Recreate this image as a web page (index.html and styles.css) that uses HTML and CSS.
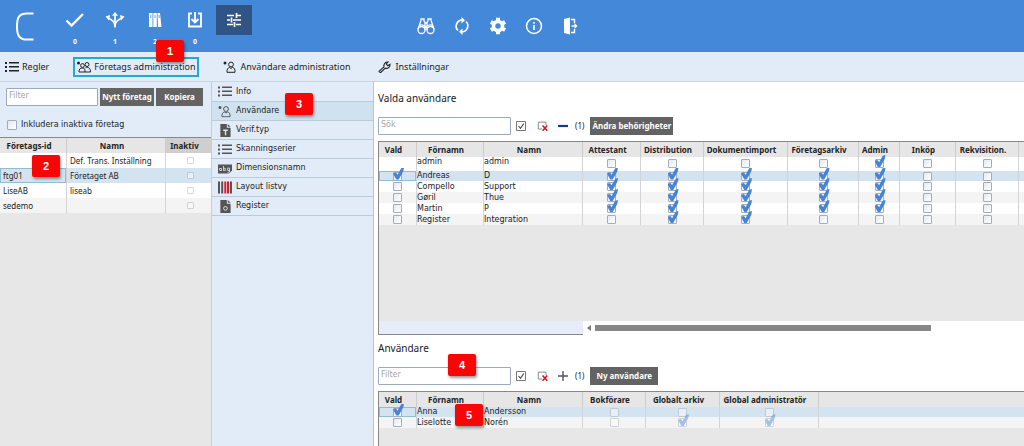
FILE: index.html
```html
<!DOCTYPE html>
<html lang="sv">
<head>
<meta charset="utf-8">
<meta name="viewport" content="width=device-width, initial-scale=1">
<title>Företags administration</title>
<link rel="stylesheet" href="styles.css">
</head>
<body>
<svg class="defs" aria-hidden="true">
  <symbol id="list" viewBox="0 0 14 12"><path d="M0 1h2v2H0zM0 5h2v2H0zM0 9h2v2H0zM4 1h10v1.500H4zM4 5h10v1.500H4zM4 9h10v1.500H4z" fill="currentColor"/></symbol>
  <symbol id="user" viewBox="0 0 14 12"><circle cx="2" cy="2" r="1.500" fill="currentColor"/><g fill="none" stroke="currentColor"><circle cx="8" cy="3.500" r="2.400"/><path d="M4 11.300c-.3-3 1-4.700 2.500-4.800l1.500 1 1.500-1c1.700.1 2.800 1.800 2.500 4.800z"/></g></symbol>
  <symbol id="doc" viewBox="0 0 14 14"><path d="M2 0h7v4h4v10H2zM10 0l3 3h-3z" fill="#555"/><path d="M5 6h5v1.500H8.300V12H6.800V7.500H5z" fill="#dde8f4"/></symbol>
  <symbol id="box-check" viewBox="0 0 12 12"><path d="M1.500 1.500h9v9h-9z" fill="none" stroke="#777"/><path d="M3.500 6l2 2.300L8.800 3.500" fill="none" stroke="#444" stroke-width="1.100"/></symbol>
  <symbol id="box-clear" viewBox="0 0 14 12"><path d="M6 9.500H1.500v-8h9V5" fill="none" stroke="#777"/><path d="M6.500 5.500l5.500 6M12 5.500l-5.500 6" stroke="#e0101b" stroke-width="1.800"/></symbol>
</svg>

<header class="topbar">
  <svg class="logo" viewBox="0 0 20 30" role="img" aria-label="C"><path d="M18.500 1.500H12C4.500 1.500 2 5 2 14.500S4.500 27.500 12 27.500h6.500" fill="none" stroke="#fff" stroke-width="2"/></svg>
  <nav class="counters">
    <button class="counter" aria-label="Godkänn"><svg viewBox="0 0 20 16"><path d="M1.500 8.500l5 5L18 2" fill="none" stroke="#fff" stroke-width="2.400"/></svg><span>0</span></button>
    <button class="counter" aria-label="Fördela"><svg viewBox="0 0 20 16"><g fill="none" stroke="#fff" stroke-width="1.700"><path d="M10 15.500V3M10 14c0-3-2-6-7-8M10 14c0-3 2-6 7-8"/></g><path d="M7 3.800L10 0l3 3.800zM5 3L4 8.500.5 4.500zM15 3l1 5.500 3.500-4z" fill="#fff"/></svg><span>1</span></button>
    <button class="counter" aria-label="Arkiv"><svg viewBox="0 0 20 16"><path d="M4 1h3.500v14H4zM8.300 1h3.500v14H8.300zM12.500 1H15l1.500 14H13z" fill="#fff"/><path d="M5.800 3v3M10 3v3M14 3l.3 3" stroke="#4488d9" stroke-width=".8"/></svg><span>2</span></button>
    <button class="counter" aria-label="Inkorg"><svg viewBox="0 0 20 16"><path d="M7 1.500H4v13h12v-13h-3M10 0v10M6.500 7l3.500 3.500L13.500 7" fill="none" stroke="#fff" stroke-width="1.800"/></svg><span>0</span></button>
  </nav>
  <button class="settings" aria-label="Administration"><svg viewBox="0 0 16 14"><path d="M1 2.500h7M11 2.500h4M10.500 0v5M1 7h3M7 7h8M5.500 4.500v5M1 11.500h6M10 11.500h5M8.500 9v5" fill="none" stroke="#fff" stroke-width="1.700"/></svg></button>
  <nav class="tools">
    <button aria-label="Sök"><svg viewBox="0 0 18 18"><g fill="none" stroke="#fff" stroke-width="1.300"><circle cx="4.500" cy="13" r="3.500"/><circle cx="13.500" cy="13" r="3.500"/><path d="M1 12L4 3.500V2h3v2l1 1.500V13M17 12l-3-8.500V2h-3v2l-1 1.500V13M8 6h2M8 10h2M2.500 8.500c2-1 4-.5 5.500 1M15.500 8.500c-2-1-4-.5-5.500 1"/></g></svg></button>
    <button aria-label="Uppdatera"><svg viewBox="0 0 18 18"><g fill="none" stroke="#fff" stroke-width="1.700"><path d="M5 13.500A6 6 0 0 1 9 3.200M13 4.500A6 6 0 0 1 9 14.800"/></g><path d="M8.500 0l3.500 3.200-3.500 3.200zM9.500 18L6 14.800l3.500-3.200z" fill="#fff"/></svg></button>
    <button aria-label="Alternativ"><svg viewBox="0 0 18 18"><circle cx="9" cy="9" r="4.500" fill="none" stroke="#fff" stroke-width="3.600"/><path d="M9 .8v3.400M9 13.800v3.400M1.900 4.900l3 1.700M13.100 11.400l3 1.700M1.900 13.100l3-1.700M13.100 6.600l3-1.700" stroke="#fff" stroke-width="4"/></svg></button>
    <button aria-label="Information"><svg viewBox="0 0 18 18"><circle cx="9" cy="9" r="7.500" fill="none" stroke="#fff" stroke-width="1.500"/><path d="M9 8v5M9 5v1.700" stroke="#fff" stroke-width="1.600"/></svg></button>
    <button aria-label="Logga ut"><svg viewBox="0 0 18 18"><path d="M3 2l6-1.500v17L3 16z" fill="#fff"/><path d="M10 2.500h3.500V6M10 15.500h3.500V12M10.500 9h5" fill="none" stroke="#fff" stroke-width="1.400"/><path d="M13.500 6l3 3-3 3z" fill="#fff"/></svg></button>
  </nav>
  <span class="mark mark-1">1</span>
</header>

<nav class="tabs">
  <a href="#regler" class="tab tab-rules"><svg viewBox="0 0 14 12"><use href="#list"/></svg>Regler</a>
  <a href="#foretag" class="tab tab-company active"><svg viewBox="0 0 14 12"><circle cx="1.500" cy="2" r="1.500" fill="currentColor"/><g fill="none" stroke="currentColor"><circle cx="5.500" cy="4.500" r="1.900"/><circle cx="10" cy="3.500" r="2"/><path d="M2 11c0-3 1-4 3.500-4S8 8.500 8 11zM8.500 6.500c3-.5 5 .5 5 4.500H8"/></g></svg>Företags administration</a>
  <a href="#anvandare" class="tab tab-users"><svg viewBox="0 0 14 12"><use href="#user"/></svg>Användare administration</a>
  <a href="#installningar" class="tab"><svg viewBox="0 0 14 12"><path d="M2 11.500L1 10.300 6 5.800C5.300 3 7.500.8 10 1L8.300 3l1.500 1.700L12 3.200C12.300 6 10 8 7.300 7.200L2.700 11.500z" fill="none" stroke="currentColor" stroke-width="1.100"/></svg>Inställningar</a>
</nav>

<div class="workspace">
  <section class="companies">
    <div class="company-tools">
      <input class="field" type="text" placeholder="Filter" aria-label="Filtrera företag">
      <button class="btn">Nytt företag</button>
      <button class="btn btn-copy">Kopiera</button>
    </div>
    <label class="include"><input class="cb" type="checkbox">Inkludera inaktiva företag</label>
    <div class="company-grid">
      <table class="grid roomy">
        <colgroup><col class="w-id"><col class="w-name"><col></colgroup>
        <thead><tr><th>Företags-id</th><th>Namn</th><th class="sorted">Inaktiv</th></tr></thead>
        <tbody>
          <tr><td></td><td>Def. Trans. Inställning</td><td><input class="cb faint" type="checkbox" disabled aria-label="Inaktiv"></td></tr>
          <tr class="sel"><td class="focus">ftg01</td><td>Företaget AB</td><td><input class="cb faint" type="checkbox" disabled aria-label="Inaktiv"></td></tr>
          <tr><td>LiseAB</td><td>liseab</td><td><input class="cb faint" type="checkbox" disabled aria-label="Inaktiv"></td></tr>
          <tr><td>sedemo</td><td></td><td><input class="cb faint" type="checkbox" disabled aria-label="Inaktiv"></td></tr>
        </tbody>
      </table>
      <span class="mark mark-2">2</span>
    </div>
  </section>

  <nav class="menu">
    <a href="#info"><svg viewBox="0 0 14 12"><use href="#list"/></svg>Info</a>
    <a href="#users" class="current"><svg viewBox="0 0 14 12"><use href="#user"/></svg>Användare</a>
    <a href="#verif"><svg viewBox="0 0 14 14"><use href="#doc"/></svg>Verif.typ</a>
    <a href="#skanning"><svg viewBox="0 0 14 12"><use href="#list"/></svg>Skanningserier</a>
    <a href="#dimension"><svg viewBox="0 0 14 12"><path d="M0 2h14v6l-3 3H0z" fill="#555"/><path d="M1.500 7.500V6h2v2h-2M5.500 3.500V8h1.800V5.800H5.500M11.500 5.500H9.700V8h1.800M11.500 5.500V9.500l-2 .5" fill="none" stroke="#dde8f4" stroke-width=".8"/></svg>Dimensionsnamn</a>
    <a href="#layout"><svg viewBox="0 0 14 12"><path d="M0 0h2v12H0zM3.200 0h2v12h-2zM12 0h2v12h-2z" fill="#555"/><path d="M6.300 0h2v12h-2zM9 0h2v12H9z" fill="#e2172c"/></svg>Layout listvy</a>
    <a href="#register"><svg viewBox="0 0 14 14"><path d="M2 0h7v4h4v10H2zM10 0l3 3h-3z" fill="#555"/><circle cx="7.500" cy="9" r="2" fill="none" stroke="#dde8f4"/></svg>Register</a>
    <span class="mark mark-3">3</span>
  </nav>

  <main class="content">
    <h2>Valda användare</h2>
    <div class="bar">
      <input class="field" type="text" placeholder="Sök" aria-label="Sök valda användare">
      <button class="ico" aria-label="Markera alla"><svg viewBox="0 0 12 12"><use href="#box-check"/></svg></button>
      <button class="ico" aria-label="Avmarkera alla"><svg viewBox="0 0 14 12"><use href="#box-clear"/></svg></button>
      <button class="ico ico-sign" aria-label="Ta bort"><svg viewBox="0 0 12 12"><path d="M1 6h10" stroke="#143c7d" stroke-width="2.200"/></svg></button>
      <span class="count">(1)</span>
      <button class="btn">Ändra behörigheter</button>
    </div>
    <div class="panel panel-main">
      <table class="grid">
        <colgroup><col class="c-vald"><col class="c-first"><col class="c-last"><col class="c-att"><col class="c-dist"><col class="c-dok"><col class="c-ark"><col class="c-adm"><col class="c-ink"><col class="c-rek"><col></colgroup>
        <thead><tr><th>Vald</th><th>Förnamn</th><th>Namn</th><th>Attestant</th><th>Distribution</th><th>Dokumentimport</th><th>Företagsarkiv</th><th>Admin</th><th>Inköp</th><th>Rekvisition.</th><th></th></tr></thead>
        <tbody>
          <tr class="tall"><td></td><td>admin</td><td>admin</td><td><input class="cb" type="checkbox" aria-label="Attestant"></td><td><input class="cb" type="checkbox" aria-label="Distribution"></td><td><input class="cb" type="checkbox" aria-label="Dokumentimport"></td><td><input class="cb" type="checkbox" aria-label="Företagsarkiv"></td><td><input class="cb" type="checkbox" checked aria-label="Admin"></td><td><input class="cb" type="checkbox" aria-label="Inköp"></td><td><input class="cb" type="checkbox" aria-label="Rekvisition"></td><td></td></tr>
          <tr class="sel"><td class="focus"><input class="cb" type="checkbox" checked aria-label="Vald"></td><td>Andreas</td><td>D</td><td><input class="cb" type="checkbox" checked aria-label="Attestant"></td><td><input class="cb" type="checkbox" checked aria-label="Distribution"></td><td><input class="cb" type="checkbox" checked aria-label="Dokumentimport"></td><td><input class="cb" type="checkbox" checked aria-label="Företagsarkiv"></td><td><input class="cb" type="checkbox" checked aria-label="Admin"></td><td><input class="cb" type="checkbox" aria-label="Inköp"></td><td><input class="cb" type="checkbox" aria-label="Rekvisition"></td><td></td></tr>
          <tr><td><input class="cb" type="checkbox" aria-label="Vald"></td><td>Compello</td><td>Support</td><td><input class="cb" type="checkbox" checked aria-label="Attestant"></td><td><input class="cb" type="checkbox" checked aria-label="Distribution"></td><td><input class="cb" type="checkbox" checked aria-label="Dokumentimport"></td><td><input class="cb" type="checkbox" checked aria-label="Företagsarkiv"></td><td><input class="cb" type="checkbox" checked aria-label="Admin"></td><td><input class="cb" type="checkbox" aria-label="Inköp"></td><td><input class="cb" type="checkbox" aria-label="Rekvisition"></td><td></td></tr>
          <tr><td><input class="cb" type="checkbox" aria-label="Vald"></td><td>Gøril</td><td>Thue</td><td><input class="cb" type="checkbox" checked aria-label="Attestant"></td><td><input class="cb" type="checkbox" checked aria-label="Distribution"></td><td><input class="cb" type="checkbox" checked aria-label="Dokumentimport"></td><td><input class="cb" type="checkbox" checked aria-label="Företagsarkiv"></td><td><input class="cb" type="checkbox" checked aria-label="Admin"></td><td><input class="cb" type="checkbox" aria-label="Inköp"></td><td><input class="cb" type="checkbox" aria-label="Rekvisition"></td><td></td></tr>
          <tr><td><input class="cb" type="checkbox" aria-label="Vald"></td><td>Martin</td><td>P</td><td><input class="cb" type="checkbox" checked aria-label="Attestant"></td><td><input class="cb" type="checkbox" checked aria-label="Distribution"></td><td><input class="cb" type="checkbox" checked aria-label="Dokumentimport"></td><td><input class="cb" type="checkbox" checked aria-label="Företagsarkiv"></td><td><input class="cb" type="checkbox" checked aria-label="Admin"></td><td><input class="cb" type="checkbox" aria-label="Inköp"></td><td><input class="cb" type="checkbox" aria-label="Rekvisition"></td><td></td></tr>
          <tr><td><input class="cb" type="checkbox" aria-label="Vald"></td><td>Register</td><td>Integration</td><td><input class="cb" type="checkbox" aria-label="Attestant"></td><td><input class="cb" type="checkbox" checked aria-label="Distribution"></td><td><input class="cb" type="checkbox" checked aria-label="Dokumentimport"></td><td><input class="cb" type="checkbox" aria-label="Företagsarkiv"></td><td><input class="cb" type="checkbox" aria-label="Admin"></td><td><input class="cb" type="checkbox" aria-label="Inköp"></td><td><input class="cb" type="checkbox" aria-label="Rekvisition"></td><td></td></tr>
        </tbody>
      </table>
      <div class="scroll"><div class="frozen"></div><div class="track"><span class="arrow"></span><span class="thumb"></span></div></div>
    </div>

    <h2 class="second">Användare</h2>
    <div class="bar">
      <input class="field" type="text" placeholder="Filter" aria-label="Filtrera användare">
      <button class="ico" aria-label="Markera alla"><svg viewBox="0 0 12 12"><use href="#box-check"/></svg></button>
      <button class="ico" aria-label="Avmarkera alla"><svg viewBox="0 0 14 12"><use href="#box-clear"/></svg></button>
      <button class="ico ico-sign" aria-label="Lägg till"><svg viewBox="0 0 12 12"><path d="M1 6h10M6 1v10" stroke="#555" stroke-width="1.400"/></svg></button>
      <span class="count">(1)</span>
      <button class="btn btn-new">Ny användare</button>
      <span class="mark mark-4">4</span>
    </div>
    <div class="panel panel-users">
      <table class="grid">
        <colgroup><col class="c-vald"><col class="c-first"><col class="c-last"><col class="c-bok"><col class="c-glo"><col class="c-gad"><col></colgroup>
        <thead><tr><th>Vald</th><th>Förnamn</th><th>Namn</th><th>Bokförare</th><th>Globalt arkiv</th><th>Global administratör</th><th></th></tr></thead>
        <tbody>
          <tr class="sel"><td class="focus"><input class="cb" type="checkbox" checked aria-label="Vald"></td><td>Anna</td><td>Andersson</td><td><input class="cb faint" type="checkbox" disabled aria-label="Bokförare"></td><td><input class="cb faint" type="checkbox" disabled aria-label="Globalt arkiv"></td><td><input class="cb faint" type="checkbox" disabled aria-label="Global administratör"></td><td></td></tr>
          <tr><td><input class="cb" type="checkbox" aria-label="Vald"></td><td>Liselotte</td><td>Norén</td><td><input class="cb faint" type="checkbox" disabled aria-label="Bokförare"></td><td><input class="cb faint" type="checkbox" disabled checked aria-label="Globalt arkiv"></td><td><input class="cb faint" type="checkbox" disabled checked aria-label="Global administratör"></td><td></td></tr>
        </tbody>
      </table>
      <span class="mark mark-5">5</span>
    </div>
  </main>
</div>
</body>
</html>
```

FILE: styles.css
```css
* { box-sizing: border-box; }
body {
  margin: 0;
  min-height: 100vh;
  display: flex;
  flex-direction: column;
  background: #e1ecf8;
  color: #222;
  font: 10px/14px "Noto Sans", "Open Sans", sans-serif;
}
button { border: 0; padding: 0; background: none; font: inherit; color: inherit; }
a { color: inherit; text-decoration: none; }
svg { display: block; }
.defs { position: absolute; width: 0; height: 0; }

/* Top bar */
.topbar {
  position: relative;
  display: flex;
  align-items: flex-start;
  height: 52px;
  padding-left: 15px;
  background: #4488d9;
  color: #fff;
}
.logo { width: 20px; height: 30px; margin-top: 12px; }
.counters { display: flex; margin: 12px 0 0 20px; }
.counter { display: flex; flex-direction: column; align-items: center; gap: 8px; width: 40px; }
.counter svg { width: 20px; height: 16px; }
.counter span { font-size: 7px; line-height: 12px; font-weight: 700; }
.settings { display: grid; place-items: center; width: 36px; height: 30px; margin: 5px 0 0 1px; background: #305484; }
.settings svg { width: 16px; height: 14px; }
.tools { display: flex; gap: 18px; margin: 17px 0 0 165px; }
.tools svg { width: 18px; height: 18px; }
.tools button { width: 18px; }

/* Tabs */
.tabs { display: flex; align-items: center; height: 29px; padding-left: 5px; font: 9px/14px "Noto Sans", sans-serif; }
.tab { display: flex; align-items: center; gap: 3px; height: 20px; }
.tab svg { width: 14px; height: 12px; }
.tab-rules { margin-right: 24px; }
.tab-company { margin-right: 24px; padding: 0 2px; }
.tab-users { margin-right: 28px; }
.tab.active { border: 2px solid #22aacb; }

/* Numbered callouts */
.mark {
  position: absolute;
  z-index: 2;
  width: 28px;
  height: 22px;
  border-radius: 2px;
  background: #fa0505;
  box-shadow: 1px 2px 3px rgba(0, 0, 0, .4);
  color: #fff;
  font: 700 11px/22px "Liberation Sans", sans-serif;
  text-align: center;
}
.mark-1 { left: 156px; top: 40px; }
.mark-2 { left: 32px; top: 18px; }
.mark-3 { left: 73px; top: 11px; }
.mark-4 { left: 70px; top: -13px; }
.mark-5 { left: 76px; top: 13px; }

/* Workspace */
.workspace { flex: 1; display: flex; border-top: 1px solid #cbd5e0; }
.companies { display: flex; flex-direction: column; width: 211px; flex: none; }
.company-tools { display: flex; gap: 2px; padding: 6px 8px 0 6px; }
.field {
  min-width: 0;
  height: 18px;
  padding: 0 2px 3px;
  border: 1px solid #9cabb9;
  border-radius: 1px;
  background: #fff;
  font: 8px/12px "DejaVu Sans", sans-serif;
}
.field::placeholder { color: #a5a5a5; opacity: 1; }
.company-tools .field { flex: 1; }
.btn {
  height: 18px;
  padding: 0 2px;
  background: #636363;
  color: #fff;
  font: 700 8px/18px "Noto Sans", sans-serif;
  white-space: nowrap;
}
.company-tools .btn { width: 54px; padding: 0; }
.company-tools .btn-copy { width: 47px; }
.include {
  display: flex;
  align-items: center;
  gap: 4px;
  padding: 12px 0 5px 7px;
  font: 8px/14px "DejaVu Sans", sans-serif;
}
.company-grid { position: relative; flex: 1; background: #e7e7e7; }

/* Data grids */
.grid {
  width: 100%;
  table-layout: fixed;
  border-collapse: separate;
  border-spacing: 0;
  border-top: 1px solid #888;
  font: 8px/10px "DejaVu Sans", sans-serif;
}
.grid th {
  height: 15px;
  padding: 0 8px 0 0;
  border-right: 1px solid #ccc;
  background: #e6e6e6;
  font: 700 8px/10px "Noto Sans", sans-serif;
  text-align: center;
  white-space: nowrap;
}
.grid th.sorted { background: #cfcfcf; }
.grid td {
  height: 11px;
  padding: 0;
  border-right: 1px solid #d4d4d4;
  white-space: nowrap;
}
.grid tbody tr { background: #fff; }
.grid tbody tr:nth-child(even) { background: #f4f4f4; }
.grid tbody tr.sel { background: #d3e4f0; }
.grid .sel td { height: 10px; }
.grid .tall td { height: 14px; vertical-align: top; }
.grid .tall .cb { margin-top: 2px; }
.grid th:last-child, .grid td:last-child { border-right: 0; }
.grid .focus { box-shadow: inset 0 0 0 1px #8fbdd2; }
.grid.roomy { font: 8px/10px "Noto Sans", sans-serif; }
.grid.roomy td { height: 15px; padding-left: 3px; }
.grid .cb { width: 9px; height: 9px; margin: 0 auto; }
.w-id { width: 67px; }
.w-name { width: 99px; }
.c-vald { width: 38px; }
.c-first { width: 67px; }
.c-last { width: 99px; }
.c-att { width: 58px; }
.c-dist { width: 63px; }
.c-dok { width: 84px; }
.c-ark { width: 71px; }
.c-adm { width: 41px; }
.c-ink { width: 56px; }
.c-rek { width: 63px; }
.c-bok { width: 63px; }
.c-glo { width: 74px; }
.c-gad { width: 99px; }

/* Check boxes */
.cb {
  appearance: none;
  position: relative;
  display: block;
  width: 10px;
  height: 10px;
  margin: 0;
  border: 1px solid #a3adb8;
  border-radius: 1px;
  background: linear-gradient(135deg, #e3e9f1, #fff);
}
.cb:checked::after {
  content: "";
  position: absolute;
  left: -1px;
  top: -5px;
  width: 11px;
  height: 12px;
  background: #4584d8;
  clip-path: polygon(0 50%, 26% 42%, 42% 60%, 74% 6%, 100% 0, 94% 32%, 52% 100%, 30% 100%);
}
.faint { opacity: .45; background: #fff; }
.grid.roomy .faint { width: 7px; height: 7px; }

/* Side menu */
.menu { position: relative; width: 163px; flex: none; border-left: 1px solid #c2cedb; border-right: 1px solid #b9c5d2; }
.menu a {
  display: flex;
  align-items: center;
  gap: 4px;
  height: 19px;
  padding: 0 6px;
  border-bottom: 1px solid #bccbd9;
  font: 8px/14px "DejaVu Sans", sans-serif;
}
.menu a:first-child { height: 20px; }
.menu a.current { background: #cfe2ef; }
.menu svg { width: 14px; height: 13px; color: #555; }

/* Main content */
.content { flex: 1; min-width: 0; display: flex; flex-direction: column; padding-left: 4px; background: #fff; }
h2 { margin: 9px 0 12px; font: 10px/14px "Noto Sans", sans-serif; }
h2.second { margin: 6px 0 12px; }
.bar { position: relative; display: flex; align-items: center; height: 18px; }
.bar .field { width: 133px; }
.ico { width: 14px; margin-left: 8px; }
.field + .ico { margin-left: 4px; }
.ico svg { width: 12px; height: 12px; }
.ico-sign { margin-left: 5px; }
.ico-sign svg { width: 14px; }
.count { margin: 0 6px 0 5px; font-size: 8px; }
.bar .btn-new { padding: 0 6px; }
.panel { position: relative; display: flex; flex-direction: column; margin-top: 6px; border-left: 1px solid #888; background: #e7e7e7; }
.panel-main { flex: 1; justify-content: space-between; }
.panel-users { min-height: 55px; }
.scroll { display: flex; height: 14px; }
.frozen { width: 204px; background: #e6edf8; border-bottom: 1px solid #888; }
.track { flex: 1; display: flex; align-items: center; gap: 4px; padding-left: 4px; background: #fff; }
.arrow { border: 3px solid transparent; border-left: 0; border-right: 4px solid #777; }
.thumb { width: 77%; height: 6px; background: #868686; }
```
